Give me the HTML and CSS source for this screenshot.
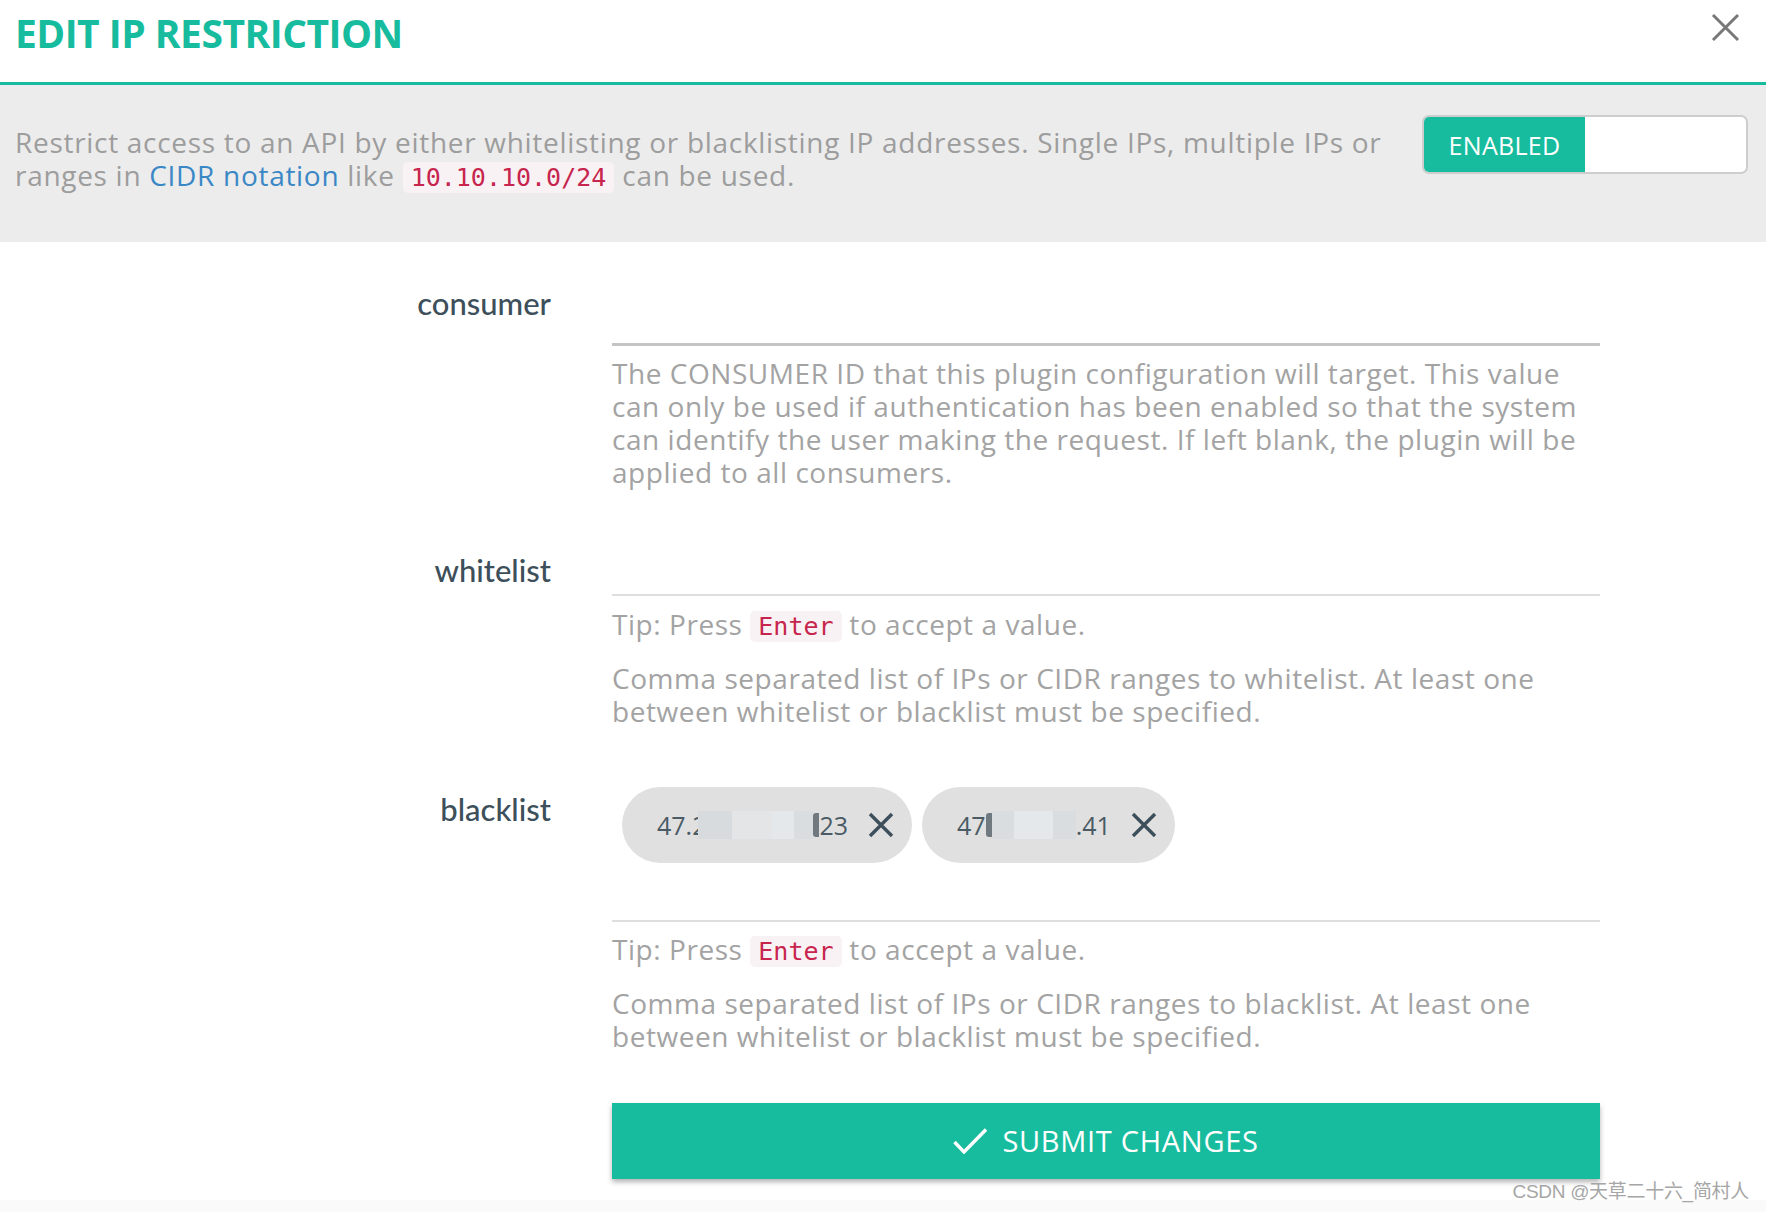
FILE: index.html
```html
<!DOCTYPE html>
<html lang="en">
<head>
<meta charset="utf-8">
<title>Edit IP Restriction</title>
<link rel="stylesheet" href="styles.css">
</head>
<body>
<div class="modal">
  <header class="modal-header">
    <h1 class="modal-title">EDIT IP RESTRICTION</h1>
    <button class="close-btn" type="button" aria-label="Close">
      <svg width="29" height="29" viewBox="0 0 29 29"><path d="M2 2 L27 27 M27 2 L2 27" stroke="#787878" stroke-width="3" fill="none"/></svg>
    </button>
  </header>

  <section class="intro">
    <p class="intro-text">Restrict access to an API by either whitelisting or blacklisting IP addresses. Single IPs, multiple IPs or ranges in <a href="#">CIDR notation</a> like <code>10.10.10.0/24</code> can be used.</p>
    <div class="toggle"><span class="toggle-on">ENABLED</span><span class="toggle-off"></span></div>
  </section>

  <form class="form">
    <div class="row">
      <label class="row-label">consumer</label>
      <div class="field">
        <div class="input input-consumer"></div>
        <p class="help help-first">The CONSUMER ID that this plugin configuration will target. This value can only be used if authentication has been enabled so that the system can identify the user making the request. If left blank, the plugin will be applied to all consumers.</p>
      </div>
    </div>

    <div class="row">
      <label class="row-label">whitelist</label>
      <div class="field">
        <div class="input input-whitelist"></div>
        <p class="help tip">Tip: Press <code>Enter</code> to accept a value.</p>
        <p class="help help-after-tip">Comma separated list of IPs or CIDR ranges to whitelist. At least one between whitelist or blacklist must be specified.</p>
      </div>
    </div>

    <div class="row">
      <label class="row-label">blacklist</label>
      <div class="field">
        <div class="input input-blacklist">
          <span class="chip chip-a">47.2<span class="redact r-a1"></span><span class="redact r-a2"></span><span class="redact r-a3"></span><span class="redact r-a4"></span><span class="redact-dark"></span>23<svg class="chip-x" width="26" height="26" viewBox="0 0 26 26"><path d="M2 2 L24 24 M24 2 L2 24" stroke="#3d4f5a" stroke-width="3.4" fill="none"/></svg></span>
          <span class="chip chip-b">47<span class="redact-dark"></span><span class="redact r-b1"></span><span class="redact r-b2"></span><span class="redact r-b3"></span>.41<svg class="chip-x" width="26" height="26" viewBox="0 0 26 26"><path d="M2 2 L24 24 M24 2 L2 24" stroke="#3d4f5a" stroke-width="3.4" fill="none"/></svg></span>
        </div>
        <p class="help tip tip-last">Tip: Press <code>Enter</code> to accept a value.</p>
        <p class="help help-after-tip">Comma separated list of IPs or CIDR ranges to blacklist. At least one between whitelist or blacklist must be specified.</p>
      </div>
    </div>

    <div class="row">
      <span></span>
      <button class="submit" type="button">
        <svg width="34" height="26" viewBox="0 0 34 26"><path d="M1.5 14 L11 24 L33 1.5" stroke="#fff" stroke-width="3.4" fill="none"/></svg>
        <span>SUBMIT CHANGES</span>
      </button>
    </div>
  </form>

  <div class="page-foot"></div>
  <div class="watermark">CSDN @天草二十六_简村人</div>
</div>
</body>
</html>
```

FILE: styles.css
```css
* { box-sizing: border-box; }
html, body { margin: 0; padding: 0; }
body {
  background: #fff;
  font-family: "Open Sans", "Noto Sans", sans-serif;
  width: 1766px;
  height: 1212px;
  overflow: hidden;
}
.modal { position: relative; height: 1212px; }

/* header */
.modal-header {
  height: 85px;
  padding: 10px 26px 0 15px;
  display: flex;
  justify-content: space-between;
  align-items: flex-start;
  border-bottom: 3px solid #17bc9e;
}
.modal-title {
  margin: 0;
  font-size: 39px;
  line-height: 46px;
  font-weight: 700;
  letter-spacing: -0.5px;
  color: #17bc9e;
}
.close-btn {
  margin-top: 3px;
  width: 29px;
  height: 29px;
  padding: 0;
  border: 0;
  background: none;
}
.close-btn svg { display: block; }

/* intro band */
.intro {
  height: 157px;
  background: #ececec;
  display: flex;
  align-items: flex-start;
  gap: 10px;
  padding: 30px 18px 0 15px;
}
.intro-text {
  flex: 1;
  margin: 11px 0 0;
  font-size: 28px;
  line-height: 33px;
  letter-spacing: 0.7px;
  color: #9d9d9d;
}
.intro-text a {
  display: inline-block;
  line-height: 28px;
  color: #3a87c6;
  text-decoration: none;
}
code {
  display: inline-block;
  font-family: "DejaVu Sans Mono", monospace;
  font-size: 25px;
  line-height: 28px;
  letter-spacing: 0;
  color: #c7254e;
  background: #f9f2f4;
  border-radius: 5px;
  padding: 2px 8px 1px;
}
.toggle {
  flex: none;
  width: 326px;
  height: 59px;
  border: 2px solid #cdcdcd;
  border-radius: 7px;
  background: #fff;
  display: flex;
  overflow: hidden;
}
.toggle-on {
  width: 161px;
  background: #17bc9e;
  color: #fff;
  font-size: 25px;
  letter-spacing: 0.3px;
  display: flex;
  align-items: center;
  justify-content: center;
}

/* form */
.form {
  display: flex;
  flex-direction: column;
  gap: 50px;
  padding-top: 30px;
}
.row {
  display: grid;
  grid-template-columns: 551px 988px;
  column-gap: 61px;
  align-items: start;
}
.row-label {
  text-align: right;
  font-family: Lato, "Open Sans", sans-serif;
  font-size: 31px;
  font-weight: 500;
  line-height: 34px;
  color: #3d4f5a;
  padding-top: 14px;
}
.input { border-bottom: 2px solid #dedede; }
.input-consumer { height: 74px; border-bottom: 3px solid #c4c4c4; }
.input-whitelist { height: 57px; }
.input-blacklist {
  padding: 9.5px 0 56.5px 10px;
  display: flex;
  gap: 10px;
}
.help {
  margin: 0;
  font-size: 28px;
  line-height: 33px;
  letter-spacing: 0.55px;
  color: #a3a3a3;
}
.help-first { margin-top: 11px; }
.tip { margin-top: 12px; }
.tip-last { margin-top: 11.5px; }
.help-after-tip { margin-top: 19.5px; }

/* chips */
.chip {
  height: 76px;
  border-radius: 38px;
  background: #e0e0e0;
  color: #4a5b65;
  font-size: 25px;
  display: inline-flex;
  align-items: center;
  padding: 0 18px 0 35px;
}
.chip-x { margin-left: 20px; display: block; }
.redact { display: inline-block; height: 28px; }
.redact-dark { display: inline-block; width: 6px; height: 24px; background: #707880; border-radius: 3px 0 0 3px; }
.r-a1 { width: 34px; margin-left: -8px; background: #d7dbde; }
.r-a2 { width: 40px; background: #e3e5e7; }
.r-a3 { width: 22px; background: #e4e8ea; }
.r-a4 { width: 19px; background: #d9dde0; }
.r-b1 { width: 22px; background: #d9dde0; }
.r-b2 { width: 39px; background: #e4e8ea; }
.r-b3 { width: 23px; background: #d9dde0; }

/* submit */
.submit {
  width: 988px;
  height: 76px;
  background: #17bc9e;
  color: #fff;
  border: 0;
  font-family: inherit;
  font-size: 29px;
  font-weight: 500;
  letter-spacing: 0.7px;
  box-shadow: 0 3px 5px rgba(0, 0, 0, 0.3);
  display: flex;
  align-items: center;
  justify-content: center;
  gap: 15px;
  padding: 0;
}
.submit svg { display: block; }

.page-foot {
  position: absolute;
  left: 0;
  right: 0;
  bottom: 0;
  height: 12px;
  background: #fafafa;
}
.watermark {
  position: absolute;
  right: 17px;
  bottom: 9px;
  font-family: "Liberation Sans", "Noto Sans CJK SC", sans-serif;
  font-size: 19px;
  color: #a6a6a6;
  letter-spacing: -0.3px;
}
```
